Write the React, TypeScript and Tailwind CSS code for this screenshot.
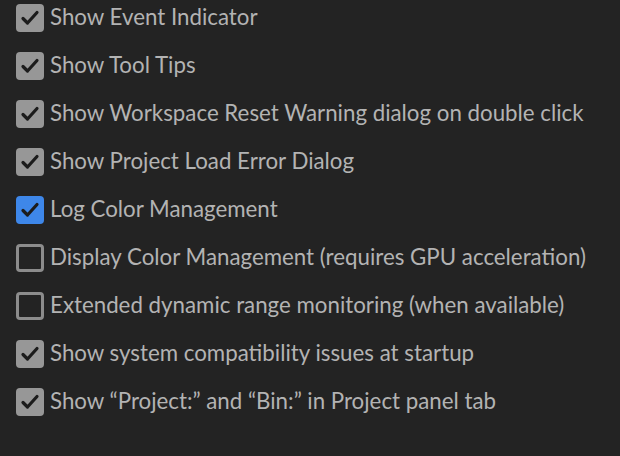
import React from "react";

const items: { label: string; state: "gray" | "blue" | "off" }[] = [
  { label: "Show Event Indicator", state: "gray" },
  { label: "Show Tool Tips", state: "gray" },
  { label: "Show Workspace Reset Warning dialog on double click", state: "gray" },
  { label: "Show Project Load Error Dialog", state: "gray" },
  { label: "Log Color Management", state: "blue" },
  { label: "Display Color Management (requires GPU acceleration)", state: "off" },
  { label: "Extended dynamic range monitoring (when available)", state: "off" },
  { label: "Show system compatibility issues at startup", state: "gray" },
  { label: "Show \u201cProject:\u201d and \u201cBin:\u201d in Project panel tab", state: "gray" },
];

function Box({ state }: { state: "gray" | "blue" | "off" }) {
  if (state === "off") {
    return <div className="w-[28px] h-[28px] shrink-0 rounded-[4px] border-[3px] border-[#8c8c8c]" />;
  }
  return (
    <div
      className={`w-[28px] h-[28px] shrink-0 rounded-[4px] flex items-center justify-center ${
        state === "blue" ? "bg-[#3e87e9]" : "bg-[#979797]"
      }`}
    >
      <svg width="28" height="28" viewBox="0 0 28 28">
        <path d="M7 14.5 L11.5 19 L21 8.5" fill="none" stroke="#1c1c1c" strokeWidth="3.2" strokeLinecap="round" strokeLinejoin="round" />
      </svg>
    </div>
  );
}

export default function App() {
  return (
    <div className="w-[620px] h-[456px] bg-[#232323] overflow-hidden pt-[4px] pl-[16px]" style={{ fontFamily: "Lato, 'Open Sans', sans-serif" }}>
      <div className="flex flex-col gap-[20px]">
        {items.map((it) => (
          <div key={it.label} className="flex items-center gap-[6px] h-[28px]">
            <Box state={it.state} />
            <span className="text-[22.3px] leading-none text-[#b3b3b3] whitespace-nowrap -mt-[1px]">{it.label}</span>
          </div>
        ))}
      </div>
    </div>
  );
}
